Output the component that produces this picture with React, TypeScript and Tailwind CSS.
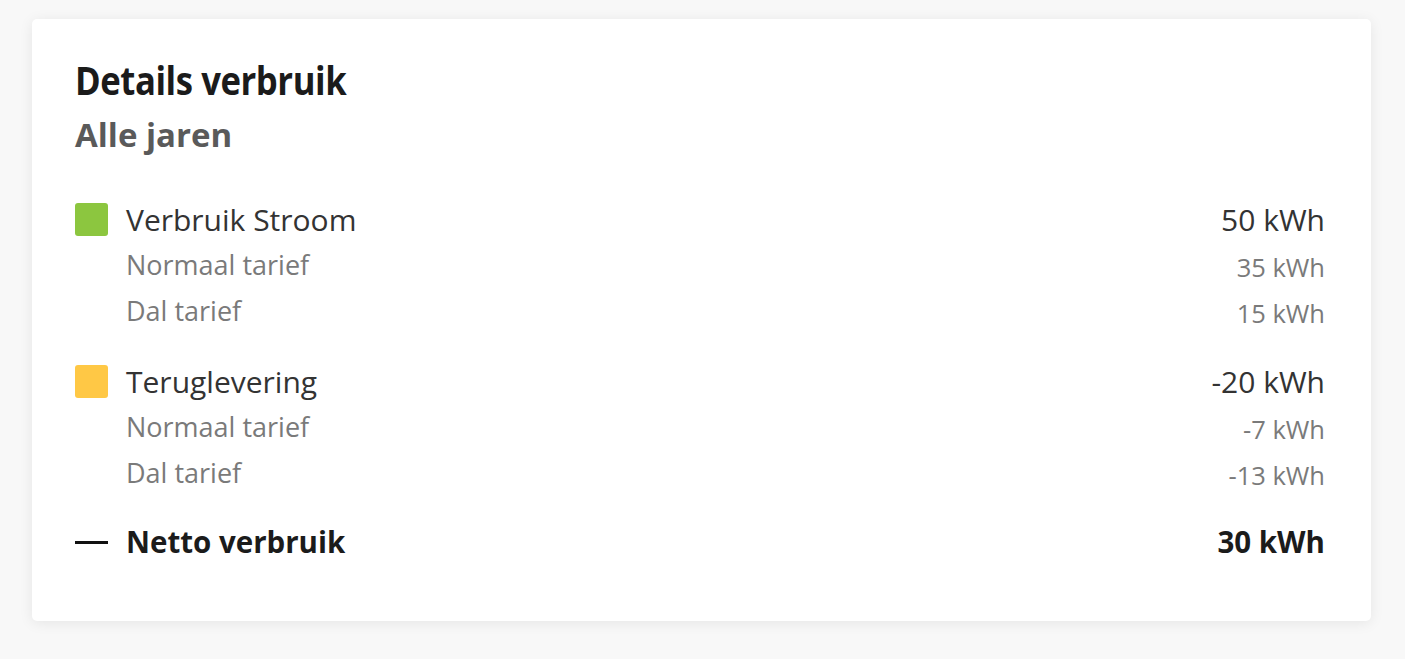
const body = "font-['Open_Sans','Noto_Sans',sans-serif]";

type Row = { label: string; value: string };
type Group = { label: string; value: string; swatch: string; rows: Row[] };

const groups: Group[] = [
  {
    label: "Verbruik Stroom",
    value: "50 kWh",
    swatch: "bg-[#8cc63f]",
    rows: [
      { label: "Normaal tarief", value: "35 kWh" },
      { label: "Dal tarief", value: "15 kWh" },
    ],
  },
  {
    label: "Teruglevering",
    value: "-20 kWh",
    swatch: "bg-[#ffc845]",
    rows: [
      { label: "Normaal tarief", value: "-7 kWh" },
      { label: "Dal tarief", value: "-13 kWh" },
    ],
  },
];

function UsageGroup({ group }: { group: Group }) {
  return (
    <div className="flex flex-col">
      <div className="flex h-[46px] items-center justify-between">
        <div className="flex items-center gap-[18px]">
          <span className={`h-[33px] w-[33px] rounded-[3px] ${group.swatch}`} />
          <span className="text-[30px] text-[#333]">{group.label}</span>
        </div>
        <span className="text-[30px] text-[#333]">{group.value}</span>
      </div>
      {group.rows.map((row) => (
        <div key={row.label} className="flex h-[46px] items-center justify-between pl-[51px]">
          <span className="text-[27px] text-[#7a7a7a]">{row.label}</span>
          <span className="translate-y-[2px] text-[25.5px] text-[#7a7a7a]">{row.value}</span>
        </div>
      ))}
    </div>
  );
}

export default function App() {
  return (
    <main className={`min-h-screen bg-[#f8f8f8] pl-[32px] pr-[34px] pt-[19px] ${body}`}>
      <section className="rounded-[5px] bg-white pb-[56px] pl-[43px] pr-[46px] pt-[39px] shadow-[0_2px_14px_rgba(0,0,0,0.08)]">
        <h1 className="origin-left scale-x-[0.89] text-[39px] font-bold leading-[44px] tracking-[-0.5px] text-[#1b1b1b]">
          Details verbruik
        </h1>
        <h2 className="mt-[13px] text-[33px] font-bold leading-[40px] text-[#5a5a5a]">
          Alle jaren
        </h2>

        <div className="mt-[41px] flex flex-col gap-[24px]">
          {groups.map((group) => (
            <UsageGroup key={group.label} group={group} />
          ))}
          <div className="-mt-px flex h-[46px] items-center justify-between">
            <div className="flex items-center gap-[18px]">
              <span className="h-[3px] w-[33px] bg-[#111]" />
              <span className="text-[29.5px] font-bold text-[#1b1b1b]">Netto verbruik</span>
            </div>
            <span className="text-[29.5px] font-bold text-[#1b1b1b]">30 kWh</span>
          </div>
        </div>
      </section>
    </main>
  );
}
